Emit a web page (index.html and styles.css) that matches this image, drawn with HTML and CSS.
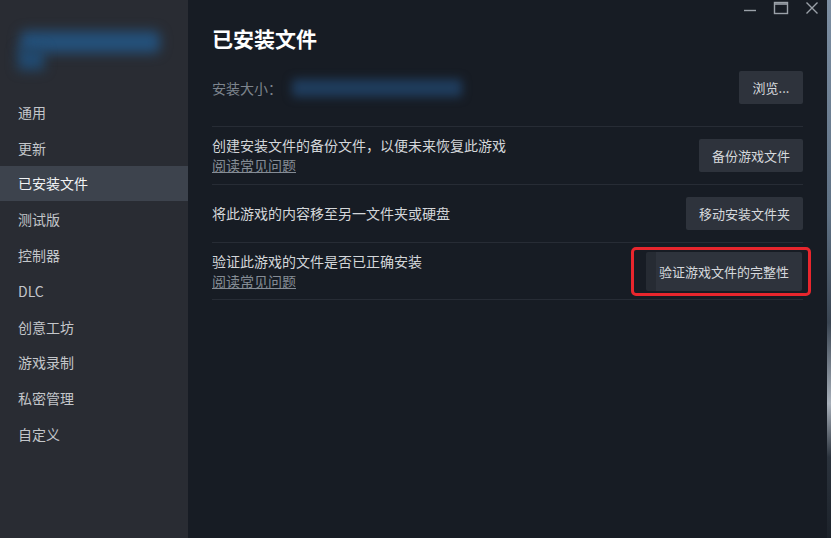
FILE: index.html
```html
<!DOCTYPE html>
<html lang="zh-CN">
<head>
<meta charset="utf-8">
<title>已安装文件</title>
<link rel="stylesheet" href="styles.css">
</head>
<body>
<div class="window">
  <aside class="sidebar">
    <div class="logo">
      <div class="logo-bar"></div>
      <div class="logo-tail"></div>
    </div>
    <nav class="nav">
      <div class="nav-item">通用</div>
      <div class="nav-item">更新</div>
      <div class="nav-item active">已安装文件</div>
      <div class="nav-item">测试版</div>
      <div class="nav-item">控制器</div>
      <div class="nav-item">DLC</div>
      <div class="nav-item">创意工坊</div>
      <div class="nav-item">游戏录制</div>
      <div class="nav-item">私密管理</div>
      <div class="nav-item">自定义</div>
    </nav>
  </aside>
  <main class="main">
    <div class="controls">
      <svg class="ctl" width="14" height="14" viewBox="0 0 14 14"><path d="M1 9.5H13" stroke="#9ba1a9" stroke-width="1.4" fill="none"/></svg>
      <svg class="ctl" width="16" height="14" viewBox="0 0 16 14"><rect x="1.5" y="1.5" width="13" height="11" stroke="#9ba1a9" stroke-width="1.4" fill="none"/><path d="M1.5 3H14.5" stroke="#9ba1a9" stroke-width="1.6"/></svg>
      <svg class="ctl" width="14" height="14" viewBox="0 0 14 14"><path d="M1.5 1.5L12.5 12.5M12.5 1.5L1.5 12.5" stroke="#9ba1a9" stroke-width="1.4" fill="none"/></svg>
    </div>
    <h1 class="title">已安装文件</h1>
    <div class="size-row">
      <span class="size-label">安装大小：</span>
      <span class="size-value"></span>
      <button class="btn btn-browse">浏览...</button>
    </div>
    <div class="row">
      <div class="row-text">
        <div class="desc">创建安装文件的备份文件，以便未来恢复此游戏</div>
        <a class="faq">阅读常见问题</a>
      </div>
      <button class="btn">备份游戏文件</button>
    </div>
    <div class="row">
      <div class="row-text">
        <div class="desc">将此游戏的内容移至另一文件夹或硬盘</div>
      </div>
      <button class="btn">移动安装文件夹</button>
    </div>
    <div class="row row-last">
      <div class="row-text">
        <div class="desc">验证此游戏的文件是否已正确安装</div>
        <a class="faq">阅读常见问题</a>
      </div>
      <div class="highlight">
        <button class="btn btn-verify">验证游戏文件的完整性</button>
      </div>
    </div>
  </main>
  <div class="edge"></div>
</div>
</body>
</html>
```

FILE: styles.css
```css
* { box-sizing: border-box; }
html, body {
  margin: 0;
  padding: 0;
  background: #171c24;
  font-family: "Noto Sans CJK SC", "Noto Sans", "Liberation Sans", sans-serif;
}
.window {
  display: flex;
  width: 831px;
  height: 538px;
  overflow: hidden;
}
.sidebar {
  width: 188px;
  flex: none;
  background: #292c33;
  display: flex;
  flex-direction: column;
}
.logo {
  height: 94px;
  position: relative;
  overflow: hidden;
}
.logo-bar {
  position: absolute;
  left: 20px;
  top: 31px;
  width: 140px;
  height: 22px;
  background: #24507a;
  filter: blur(6px);
  border-radius: 6px;
}
.logo-tail {
  position: absolute;
  left: 18px;
  top: 48px;
  width: 26px;
  height: 22px;
  background: #214a70;
  filter: blur(6px);
}
.nav {
  display: flex;
  flex-direction: column;
}
.nav-item {
  height: 35.8px;
  display: flex;
  align-items: center;
  padding-left: 18px;
  font-size: 14px;
  color: #c3c6ca;
}
.nav-item.active {
  background: #3d434d;
  color: #f2f3f4;
}
.main {
  flex: 1;
  position: relative;
  padding: 0 24px;
  background: #171c24;
  display: flex;
  flex-direction: column;
}
.controls {
  position: absolute;
  top: 1px;
  right: 8px;
  display: flex;
  align-items: center;
  gap: 16px;
}
.ctl { display: block; }
.title {
  margin: 26px 0 0;
  font-size: 21px;
  line-height: 24px;
  font-weight: 700;
  color: #ffffff;
}
.size-row {
  display: flex;
  align-items: center;
  margin-top: 21px;
  height: 33px;
  margin-bottom: 22px;
}
.size-label {
  font-size: 14px;
  color: #7d848d;
}
.size-value {
  width: 170px;
  height: 18px;
  margin-left: 10px;
  background: #1f3c5c;
  filter: blur(5px);
  border-radius: 4px;
}
.btn {
  margin-left: auto;
  height: 33px;
  padding: 0 13px;
  border: none;
  border-radius: 2px;
  background: #2e333c;
  color: #d6d9dc;
  font-family: inherit;
  font-size: 13px;
  white-space: nowrap;
}
.btn-browse { width: 64px; padding: 0; }
.row {
  display: flex;
  align-items: center;
  border-top: 1px solid #272c35;
  height: 58px;
}
.row-last {
  border-bottom: 1px solid #272c35;
}
.row-text {
  display: flex;
  flex-direction: column;
  gap: 1px;
}
.desc {
  font-size: 14px;
  line-height: 19px;
  color: #d3d6d9;
}
.faq {
  font-size: 14px;
  line-height: 19px;
  color: #858c95;
  text-decoration: underline;
  align-self: flex-start;
}
.highlight {
  margin-left: auto;
  margin-right: -8px;
  padding: 2px 6px 2px 12px;
  border: 3px solid #e8262d;
  border-radius: 5px;
  display: flex;
}
.btn-verify {
  height: 39px;
  border-left: 10px solid #262b33;
  padding-left: 3px;
}
.edge {
  width: 4px;
  flex: none;
  background: linear-gradient(#7d8fa3 0%, #5f7184 40%, #3a4552 60%, #a8b0ba 75%, #2b333d 85%, #1c222a 100%);
}
```
